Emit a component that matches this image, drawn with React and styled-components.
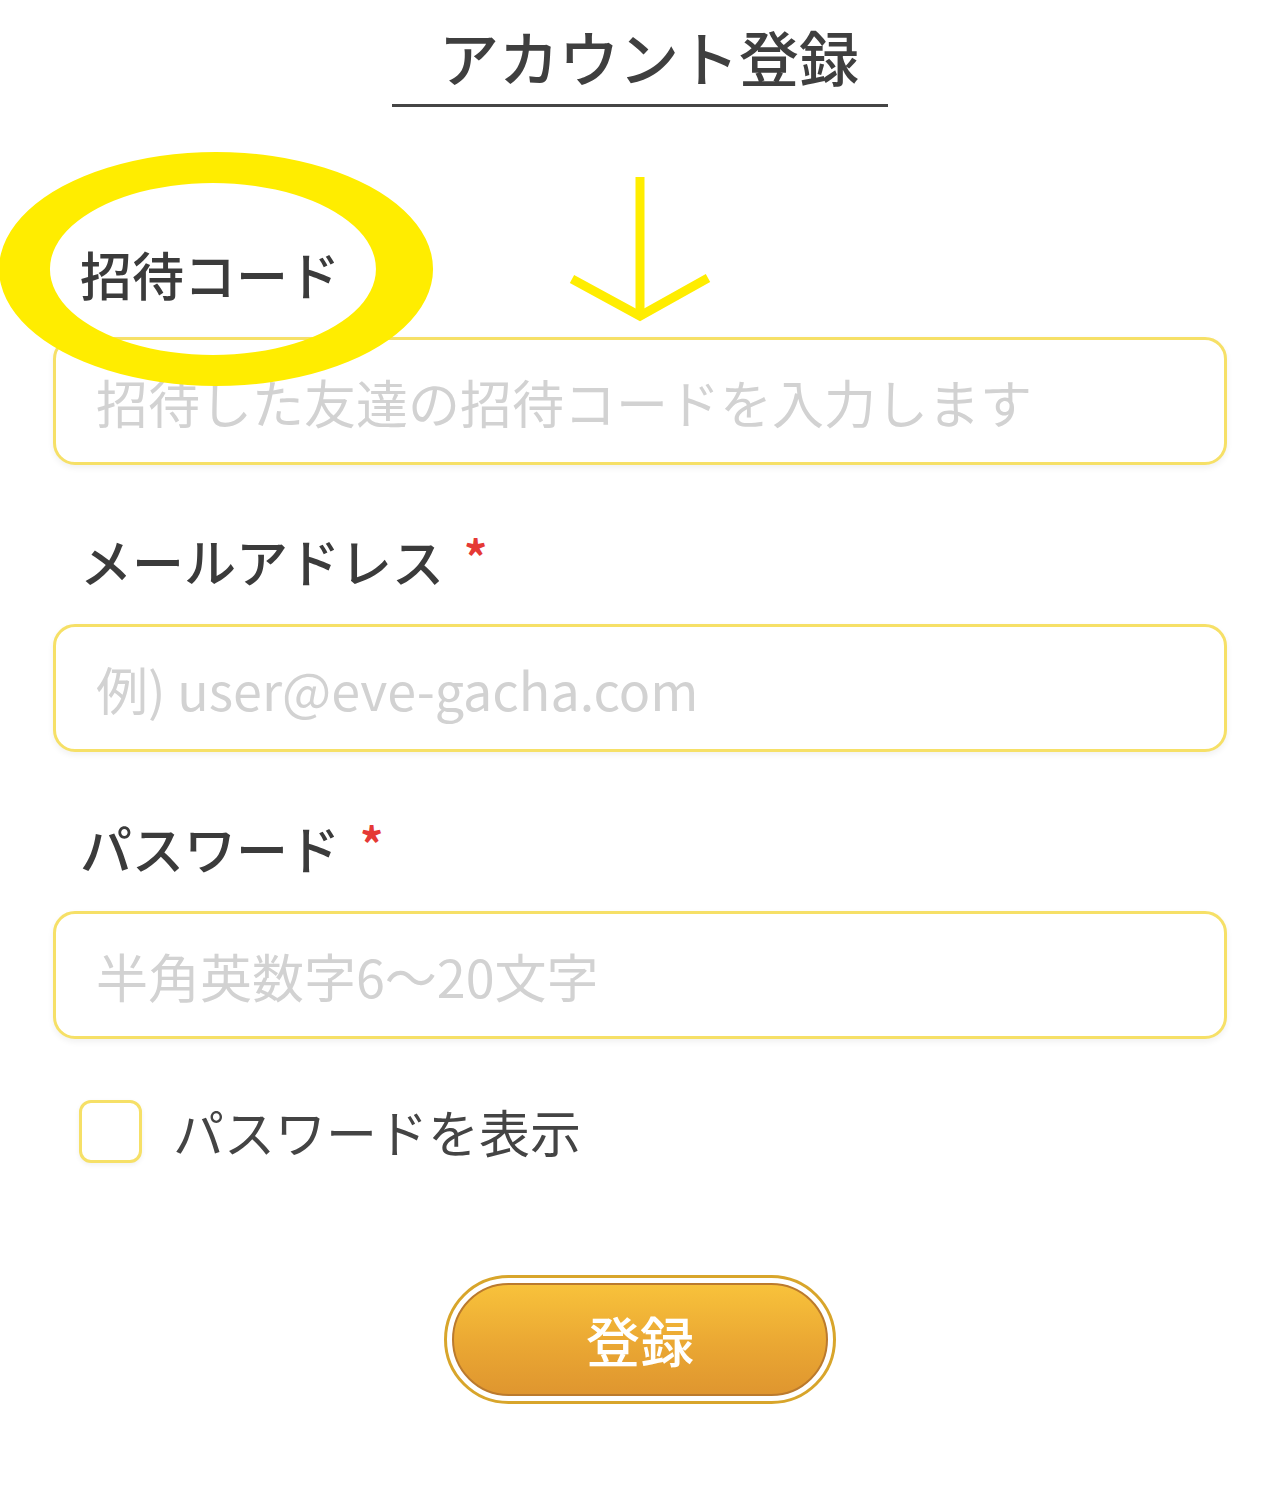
import React from "react";
import styled, { createGlobalStyle } from "styled-components";

const GlobalStyle = createGlobalStyle`
  body {
    margin: 0;
    background: #fff;
    font-family: "Noto Sans CJK JP", "Noto Sans", sans-serif;
    color: #3d3d3d;
  }
  * { box-sizing: border-box; }
`;

const Page = styled.div`
  position: relative;
  width: 1280px;
  min-height: 1494px;
  padding: 0 53px;
  overflow: hidden;
`;

const Header = styled.div`
  display: flex;
  justify-content: center;
  padding-top: 16px;
`;

const Title = styled.h1`
  margin: 0;
  padding: 0 29px 8px 47px;
  font-size: 60px;
  line-height: 80px;
  font-weight: 500;
  color: #3f3f3f;
  border-bottom: 3px solid #454545;
`;

const Form = styled.form`
  display: flex;
  flex-direction: column;
  margin-top: 131px;
`;

const Field = styled.div`
  display: flex;
  flex-direction: column;
  & + & {
    margin-top: 60px;
  }
`;

const Label = styled.label`
  display: flex;
  align-items: flex-start;
  padding-left: 27px;
  margin-bottom: 27px;
  font-size: 52px;
  line-height: 72px;
  font-weight: 500;
  color: #3b3b3b;
`;

const Required = styled.span`
  margin-left: 20px;
  margin-top: 10px;
  font-size: 46px;
  line-height: 40px;
  font-weight: 700;
  color: #e53935;
`;

const Input = styled.input`
  width: 100%;
  height: 128px;
  padding: 0 40px;
  border: 3px solid #f6e067;
  border-radius: 22px;
  background: #fff;
  font-family: "Noto Sans CJK JP", "Noto Sans", sans-serif;
  font-size: 52px;
  color: #333;
  outline: none;
  box-shadow: 0 3px 6px rgba(0, 0, 0, 0.06);
  &::placeholder {
    color: #d2d2d2;
  }
`;

const CheckRow = styled.label`
  display: flex;
  align-items: center;
  gap: 31px;
  margin-top: 61px;
  padding-left: 26px;
  font-size: 51px;
  line-height: 63px;
  color: #444;
`;

const Checkbox = styled.input`
  appearance: none;
  margin: 0;
  width: 63px;
  height: 63px;
  border: 3px solid #f6e067;
  border-radius: 12px;
  background: #fff;
  box-shadow: 0 2px 5px rgba(0, 0, 0, 0.06);
`;

const ButtonRow = styled.div`
  display: flex;
  justify-content: center;
  margin-top: 112px;
`;

const ButtonRing = styled.div`
  width: 392px;
  height: 129px;
  padding: 5px;
  border: 3px solid #d8a52b;
  border-radius: 65px;
  background: #fff;
`;

const SubmitButton = styled.button`
  width: 100%;
  height: 100%;
  border: 2px solid #bb7a2d;
  border-radius: 60px;
  background: linear-gradient(180deg, #f8c23b 0%, #eaa733 55%, #df962f 100%);
  color: #fff;
  font-family: "Noto Sans CJK JP", "Noto Sans", sans-serif;
  font-size: 54px;
  font-weight: 500;
  cursor: pointer;
`;

const Annotation = styled.svg`
  position: absolute;
  top: 0;
  left: 0;
  pointer-events: none;
`;

const fields = [
  { label: "招待コード", placeholder: "招待した友達の招待コードを入力します", type: "text" },
  { label: "メールアドレス", placeholder: "例) user@eve-gacha.com", type: "email", required: true },
  { label: "パスワード", placeholder: "半角英数字6〜20文字", type: "password", required: true },
];

export default function App() {
  return (
    <Page>
      <GlobalStyle />
      <Header>
        <Title>アカウント登録</Title>
      </Header>
      <Form onSubmit={(e) => e.preventDefault()}>
        {fields.map((f) => (
          <Field key={f.label}>
            <Label>
              {f.label}
              {f.required && <Required>*</Required>}
            </Label>
            <Input type={f.type} placeholder={f.placeholder} />
          </Field>
        ))}
        <CheckRow>
          <Checkbox type="checkbox" />
          パスワードを表示
        </CheckRow>
        <ButtonRow>
          <ButtonRing>
            <SubmitButton type="submit">登録</SubmitButton>
          </ButtonRing>
        </ButtonRow>
      </Form>
      {/* hand-drawn highlight over the invite code field */}
      <Annotation width="1280" height="480" viewBox="0 0 1280 480">
        <path
          fillRule="evenodd"
          fill="#ffed00"
          d="M216 152 A217 117 0 1 0 216.1 152 Z M213 183 A163 86 0 1 1 212.9 183 Z"
        />
        <g stroke="#ffed00" strokeWidth="9" fill="none" strokeLinecap="butt">
          <line x1="640" y1="177" x2="640" y2="314" />
          <polyline points="572,279 640,316 708,278" />
        </g>
      </Annotation>
    </Page>
  );
}
